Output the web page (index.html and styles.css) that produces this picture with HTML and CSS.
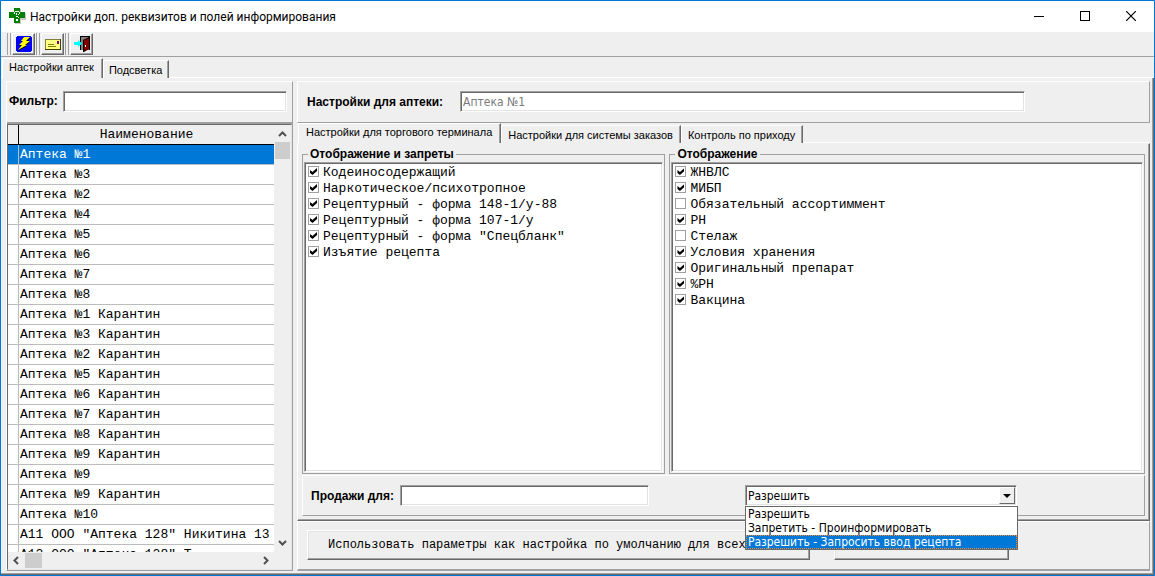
FILE: index.html
```html
<!DOCTYPE html>
<html lang="ru">
<head>
<meta charset="utf-8">
<title>Настройки доп. реквизитов и полей информирования</title>
<link rel="stylesheet" href="styles.css">
</head>
<body>
<div class="window">
  <header class="titlebar">
    <svg class="app-icon" width="17" height="16" viewBox="0 0 17 16" aria-hidden="true">
      <path d="M6 1h6v4h5v7h-5v4H6z" fill="#c8c8c8"/>
      <path d="M5 0h6v4h5v6h-5v5H5v-5H0V4h5z" fill="#008000"/>
      <path d="M6 3h4v1H6zM5 4h1v2H5zM10 4h1v2h-1zM9 6h1v1H9zM7 5h1v2H7zM7 8h2v1H7zM9 9h1v1H9zM7 11h2v2H7z" fill="#fff"/>
    </svg>
    <h1 class="title">Настройки доп. реквизитов и полей информирования</h1>
    <div class="window-buttons">
      <button class="winbtn" type="button" aria-label="Свернуть"><svg width="10" height="10" viewBox="0 0 10 10"><path d="M0 5h10v1H0z"/></svg></button>
      <button class="winbtn" type="button" aria-label="Развернуть"><svg width="10" height="10" viewBox="0 0 10 10"><path d="M0 0h10v10H0zM1 1v8h8V1z" fill-rule="evenodd"/></svg></button>
      <button class="winbtn" type="button" aria-label="Закрыть"><svg width="10" height="10" viewBox="0 0 10 10"><path d="M0 0l10 10M10 0L0 10" stroke="#000" stroke-width="1.2"/></svg></button>
    </div>
  </header>

  <div class="toolbar">
    <span class="grip"></span>
    <button class="tool" type="button" aria-label="Выполнить"><svg width="16" height="16" viewBox="0 0 16 16"><path d="M0 0h16v16H0z" fill="#00f"/><path d="M0 0h1v1H0zM15 0h1v1h-1zM0 15h1v1H0zM15 15h1v1h-1z" fill="#efefef"/><path d="M8 2h6l-3 4h3L9 10h2L2 15l4-5H3l4-4H5z" fill="#000"/><path d="M8 1h6l-4 4h4L9 9h2L2 14l4-5H3l4-4H5z" fill="#ff0"/></svg></button>
    <span class="grip"></span>
    <button class="tool" type="button" aria-label="Сообщение"><svg width="16" height="16" viewBox="0 0 16 16"><path d="M0 3h16v11H0z" fill="#404000"/><path d="M1 4h14v9H1z" fill="#ffff80"/><path d="M0 3h15v1H0zM0 3h1v10H0z" fill="#808040"/><path d="M12 5h2v3h-2z" fill="#800080"/><path d="M3 8h6v1H3zM3 10h8v1H3z" fill="#808000"/></svg></button>
    <span class="grip"></span>
    <button class="tool" type="button" aria-label="Выход"><svg width="18" height="16" viewBox="0 0 18 16"><path d="M7 0h10v14H7z" fill="#000"/><path d="M8 1h8v13H8z" fill="#808080"/><path d="M10 4l6-3v12l-5 3h-1z" fill="#000"/><path d="M11 4l5-2v11l-5 2z" fill="#800000"/><path d="M12 9h1v2h-1z" fill="#fff"/><path d="M1 6h4V4l4 3.500-4 3.500V9H1z" fill="#0ff"/></svg></button>
  </div>

  <nav class="tabs main-tabs" role="tablist">
    <button class="tab active" type="button" role="tab" aria-selected="true">Настройки аптек</button>
    <button class="tab" type="button" role="tab" aria-selected="false">Подсветка</button>
  </nav>

  <main class="page">
    <section class="left">
      <div class="filter">
        <label class="caption" for="filter">Фильтр:</label>
        <input class="field grow" id="filter" type="text">
      </div>
      <div class="grid-box">
        <div class="grid-view">
          <table class="grid">
            <thead><tr><th class="mark"></th><th>Наименование</th></tr></thead>
            <tbody>
              <tr class="selected"><td class="mark"></td><td>Аптека №1</td></tr>
              <tr><td class="mark"></td><td>Аптека №3</td></tr>
              <tr><td class="mark"></td><td>Аптека №2</td></tr>
              <tr><td class="mark"></td><td>Аптека №4</td></tr>
              <tr><td class="mark"></td><td>Аптека №5</td></tr>
              <tr><td class="mark"></td><td>Аптека №6</td></tr>
              <tr><td class="mark"></td><td>Аптека №7</td></tr>
              <tr><td class="mark"></td><td>Аптека №8</td></tr>
              <tr><td class="mark"></td><td>Аптека №1 Карантин</td></tr>
              <tr><td class="mark"></td><td>Аптека №3 Карантин</td></tr>
              <tr><td class="mark"></td><td>Аптека №2 Карантин</td></tr>
              <tr><td class="mark"></td><td>Аптека №5 Карантин</td></tr>
              <tr><td class="mark"></td><td>Аптека №6 Карантин</td></tr>
              <tr><td class="mark"></td><td>Аптека №7 Карантин</td></tr>
              <tr><td class="mark"></td><td>Аптека №8 Карантин</td></tr>
              <tr><td class="mark"></td><td>Аптека №9 Карантин</td></tr>
              <tr><td class="mark"></td><td>Аптека №9</td></tr>
              <tr><td class="mark"></td><td>Аптека №9 Карантин</td></tr>
              <tr><td class="mark"></td><td>Аптека №10</td></tr>
              <tr><td class="mark"></td><td>А11 ООО "Аптека 128" Никитина 13</td></tr>
              <tr><td class="mark"></td><td>А12 ООО "Аптека 128" Т</td></tr>
            </tbody>
          </table>
        </div>
        <div class="vscroll">
          <svg class="arrow" width="9" height="6" viewBox="0 0 9 6"><path d="M1 5l3.500-3.500L8 5" fill="none" stroke="#505050" stroke-width="2"/></svg>
          <span class="vthumb"></span>
          <svg class="arrow" width="9" height="6" viewBox="0 0 9 6"><path d="M1 1l3.500 3.500L8 1" fill="none" stroke="#505050" stroke-width="2"/></svg>
        </div>
        <div class="hscroll">
          <svg class="arrow" width="6" height="9" viewBox="0 0 6 9"><path d="M5 1L1.500 4.500 5 8" fill="none" stroke="#505050" stroke-width="2"/></svg>
          <span class="hthumb"></span>
          <svg class="arrow" width="6" height="9" viewBox="0 0 6 9"><path d="M1 1l3.500 3.500L1 8" fill="none" stroke="#505050" stroke-width="2"/></svg>
        </div>
      </div>
    </section>

    <section class="right">
      <div class="pharmacy">
        <label class="caption" for="pharmacy">Настройки для аптеки:</label>
        <input class="field pharmacy-field" id="pharmacy" type="text" value="Аптека №1" disabled>
      </div>

      <nav class="tabs inner-tabs" role="tablist">
        <button class="tab active" type="button" role="tab" aria-selected="true">Настройки для торгового терминала</button>
        <button class="tab" type="button" role="tab" aria-selected="false">Настройки для системы заказов</button>
        <button class="tab" type="button" role="tab" aria-selected="false">Контроль по приходу</button>
      </nav>

      <div class="terminal">
        <div class="groups">
          <fieldset class="group">
            <legend class="legend">Отображение и запреты</legend>
            <div class="checks">
              <label class="check"><input type="checkbox" checked>Кодеиносодержащий</label>
              <label class="check"><input type="checkbox" checked>Наркотическое/психотропное</label>
              <label class="check"><input type="checkbox" checked>Рецептурный - форма 148-1/у-88</label>
              <label class="check"><input type="checkbox" checked>Рецептурный - форма 107-1/у</label>
              <label class="check"><input type="checkbox" checked>Рецептурный - форма "Спецбланк"</label>
              <label class="check"><input type="checkbox" checked>Изъятие рецепта</label>
            </div>
          </fieldset>
          <fieldset class="group">
            <legend class="legend">Отображение</legend>
            <div class="checks">
              <label class="check"><input type="checkbox" checked>ЖНВЛС</label>
              <label class="check"><input type="checkbox" checked>МИБП</label>
              <label class="check"><input type="checkbox">Обязательный ассортиммент</label>
              <label class="check"><input type="checkbox" checked>РН</label>
              <label class="check"><input type="checkbox">Стелаж</label>
              <label class="check"><input type="checkbox" checked>Условия хранения</label>
              <label class="check"><input type="checkbox" checked>Оригинальный препарат</label>
              <label class="check"><input type="checkbox" checked>%РН</label>
              <label class="check"><input type="checkbox" checked>Вакцина</label>
            </div>
          </fieldset>
        </div>
        <div class="sales">
          <label class="caption" for="sales">Продажи для:</label>
          <input class="field sales-field" id="sales" type="text">
          <div class="combo">
            <select class="field combo-select" aria-label="Действие">
              <option selected>Разрешить</option>
              <option>Запретить - Проинформировать</option>
              <option>Разрешить - Запросить ввод рецепта</option>
            </select>
            <span class="combo-arrow"></span>
            <ul class="menu" role="listbox" aria-label="Действие">
              <li class="item" role="option">Разрешить</li>
              <li class="item" role="option">Запретить - Проинформировать</li>
              <li class="item current" role="option" aria-selected="true">Разрешить - Запросить ввод рецепта</li>
            </ul>
          </div>
        </div>
      </div>

      <div class="actions">
        <button class="push wide" type="button">Использовать параметры как настройка по умолчанию для всех аптек</button>
        <button class="push" type="button" aria-label="Сохранить"></button>
      </div>
    </section>
  </main>
</div>
</body>
</html>
```
FILE: styles.css
```css
* { box-sizing: border-box; }

:root {
  --face: #efefef;
  --light: #ffffff;
  --soft: #e3e3e3;
  --shade: #a0a0a0;
  --dark: #696969;
  --accent: #0078d7;
}

body {
  margin: 0;
  background: var(--face);
  color: #000;
  font: 11px/14px "Liberation Sans", Arial, sans-serif;
}

button, input, select { font: inherit; color: inherit; }

.window {
  display: flex;
  flex-direction: column;
  height: 100vh;
  border: 1px solid var(--accent);
}

/* Title bar */
.titlebar {
  display: flex;
  align-items: center;
  height: 31px;
  padding-left: 8px;
  background: #fff;
}
.app-icon { margin-bottom: 2px; }
.title {
  flex: 1;
  margin: 0 0 0 4px;
  font: 12px/16px Roboto, "Open Sans", sans-serif;
}
.window-buttons { display: flex; }
.winbtn {
  display: flex;
  align-items: center;
  justify-content: center;
  width: 46px;
  height: 30px;
  padding: 0 0 2px;
  border: 0;
  background: none;
}

/* Toolbar */
.toolbar {
  display: flex;
  align-items: center;
  gap: 1px;
  height: 25px;
  padding: 0 6px 1px;
  border-bottom: 1px solid var(--shade);
}
.grip {
  width: 4px;
  height: 22px;
  border: solid var(--shade);
  border-width: 0 1px;
}
.tool {
  display: flex;
  align-items: center;
  justify-content: center;
  width: 23px;
  height: 22px;
  padding: 0;
  border: 1px solid;
  border-color: var(--light) var(--dark) var(--dark) var(--light);
  box-shadow: inset -1px -1px var(--shade);
  background: var(--face);
}

/* Tabs */
.tabs {
  display: flex;
  align-items: flex-end;
  height: 20px;
  box-shadow: inset 0 -1px var(--light);
}
.main-tabs {
  height: 21px;
  padding-left: 1px;
}
.inner-tabs { padding-left: 1px; }
.tab {
  height: 18px;
  padding: 1px 6px 0 5px;
  border: 1px solid;
  border-color: var(--light) var(--dark) transparent var(--light);
  border-bottom: 0;
  box-shadow: inset -1px 0 var(--shade);
  background: var(--face);
  font-size: 11px;
  line-height: 14px;
  white-space: nowrap;
}
.inner-tabs .tab { padding: 1px 7px 0 6px; }
.tab.active {
  height: 20px;
  padding: 0 8px 3px 6px;
}
.inner-tabs .tab.active { padding: 0 8px 3px 7px; }

/* Page */
.page {
  display: flex;
  flex: 1;
  gap: 4px;
  min-height: 0;
  padding: 3px 3px 3px 5px;
  border: solid var(--dark);
  border-width: 0 1px 1px 0;
  box-shadow: inset -1px -1px var(--shade);
}
.caption {
  font-size: 12px;
  font-weight: bold;
  white-space: nowrap;
}
.field {
  height: 21px;
  padding: 0 2px;
  border: 1px solid;
  border-color: var(--shade) var(--light) var(--light) var(--shade);
  border-radius: 0;
  outline: 0;
  box-shadow: inset 1px 1px var(--dark), inset -1px -1px var(--soft);
  background: #fff;
  font: 12px/16px "DejaVu Sans Condensed", "DejaVu Sans", sans-serif;
}
.field:disabled { color: #7a7a7a; }
.grow { flex: 1; min-width: 0; }

/* Pharmacy list */
.left {
  display: flex;
  flex-direction: column;
  width: 287px;
  border: 1px solid;
  border-color: var(--light) var(--shade) var(--shade) var(--light);
}
.filter {
  display: flex;
  align-items: center;
  gap: 5px;
  height: 42px;
  padding: 0 5px 2px 2px;
  border-bottom: 2px solid var(--shade);
}
.grid-box {
  display: grid;
  grid-template: 1fr 17px / 1fr 17px;
  flex: 1;
  min-height: 0;
  border: 1px solid;
  border-color: var(--dark) var(--soft) var(--soft) var(--dark);
}
.grid-view { overflow: hidden; background: #fff; }
.grid {
  width: 100%;
  table-layout: fixed;
  border-collapse: separate;
  border-spacing: 0;
  font: 13px/16px "Liberation Mono", "Courier New", monospace;
}
.grid th, .grid td {
  height: 20px;
  padding: 0 1px;
  border-bottom: 1px solid #bcbcbc;
  overflow: hidden;
  white-space: nowrap;
}
.grid th {
  border-bottom-color: #000;
  background: var(--face);
  font-weight: normal;
}
.grid .mark {
  width: 11px;
  border-right: 1px solid #bcbcbc;
}
.grid th.mark { border-right-color: #000; }
.selected { background: var(--accent); color: #fff; }
.vscroll, .hscroll {
  display: flex;
  align-items: center;
  background: var(--face);
}
.vscroll { flex-direction: column; padding: 6px 0; }
.hscroll { padding: 0 5px; }
.vthumb {
  width: 15px;
  height: 17px;
  margin: 5px 0 auto;
  background: #cdcdcd;
}
.hthumb {
  width: 17px;
  height: 15px;
  margin: 0 auto 0 6px;
  background: #cdcdcd;
}

/* Settings */
.right {
  display: flex;
  flex: 1;
  flex-direction: column;
  min-width: 0;
}
.pharmacy {
  display: flex;
  align-items: center;
  gap: 17px;
  height: 42px;
  padding: 0 9px 1px;
  border: 1px solid;
  border-color: var(--light) var(--shade) var(--shade) var(--light);
}
.pharmacy-field { width: 565px; }
.terminal {
  display: flex;
  flex: 1;
  flex-direction: column;
  gap: 1px;
  min-height: 0;
  padding: 4px;
  border: 1px solid;
  border-color: transparent var(--dark) var(--dark) var(--light);
  box-shadow: inset -1px -1px var(--shade);
}
.groups {
  display: grid;
  grid-template-columns: 363fr 475fr;
  gap: 4px;
  flex: 1;
  min-height: 0;
}
.group {
  display: flex;
  flex-direction: column;
  min-width: 0;
  margin: 0;
  padding: 2px 1px 1px;
  border: 1px solid var(--shade);
}
.legend {
  margin-left: 4px;
  padding: 0 2px;
  font-size: 12px;
  line-height: 12px;
  font-weight: bold;
}
.checks {
  flex: 1;
  padding: 1px 3px;
  border: 1px solid;
  border-color: var(--shade) var(--light) var(--light) var(--shade);
  box-shadow: inset 1px 1px var(--dark), inset -1px -1px var(--soft);
  background: #fff;
}
.check {
  display: flex;
  align-items: flex-start;
  gap: 4px;
  height: 16px;
  font: 13px/18px "Liberation Mono", "Courier New", monospace;
  white-space: nowrap;
}
.check input {
  appearance: none;
  display: grid;
  place-items: center;
  width: 11px;
  height: 11px;
  margin: 2px 0 0;
  border: 1px solid var(--shade);
  background: #fff;
}
.check input:checked::before {
  content: "";
  width: 7px;
  height: 7px;
  background: #000;
  clip-path: polygon(0 28%, 36% 58%, 100% 0, 100% 42%, 36% 100%, 0 72%);
}

/* Sales row */
.sales {
  display: flex;
  align-items: center;
  height: 41px;
  padding: 0 8px;
  border: 1px solid;
  border-color: var(--light) var(--shade) var(--shade) var(--light);
}
.sales-field { width: 249px; margin: 0 96px 0 6px; }
.combo { position: relative; width: 272px; }
.combo-select {
  display: block;
  appearance: none;
  width: 100%;
}
.combo-arrow {
  position: absolute;
  top: 2px;
  right: 2px;
  display: grid;
  place-items: center;
  width: 16px;
  height: 17px;
  border: 1px solid;
  border-color: var(--light) var(--dark) var(--dark) var(--light);
  background: var(--face);
  pointer-events: none;
}
.combo-arrow::before {
  content: "";
  border: 4px solid transparent;
  border-top-color: #000;
  border-bottom: 0;
}
.menu {
  position: absolute;
  z-index: 1;
  top: 100%;
  left: 0;
  width: 273px;
  margin: 0;
  padding: 0;
  border: 1px solid var(--dark);
  background: #fff;
  font: 12px/14px "DejaVu Sans Condensed", "DejaVu Sans", sans-serif;
  list-style: none;
}
.item { height: 14px; padding: 0 2px; }
.current {
  outline: 1px dotted #ff8728;
  outline-offset: -1px;
  background: var(--accent);
  color: #fff;
}

/* Bottom buttons */
.actions {
  display: flex;
  align-items: center;
  gap: 24px;
  height: 50px;
  padding: 0 9px 2px;
  border: solid;
  border-width: 1px 1px 2px;
  border-color: var(--light) var(--shade) var(--shade) var(--light);
}
.push {
  width: 175px;
  height: 30px;
  padding: 0;
  border: 1px solid;
  border-color: var(--light) var(--dark) var(--dark) var(--light);
  box-shadow: inset -1px -1px var(--shade), inset 1px 1px var(--soft);
  background: var(--face);
  font: 12px/16px "Liberation Mono", "Courier New", monospace;
  white-space: nowrap;
}
.push.wide { width: 503px; }
```
